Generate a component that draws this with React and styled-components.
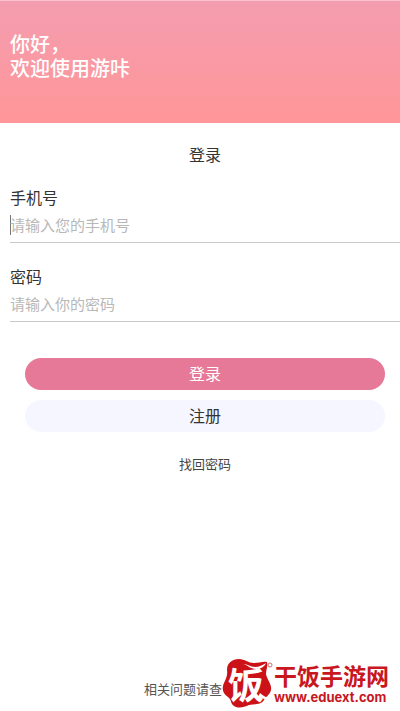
import React from "react"
import styled, { createGlobalStyle } from "styled-components"

const GlobalStyle = createGlobalStyle`
  * {
    box-sizing: border-box;
  }
  body {
    margin: 0;
    background-color: white;
    color: #333333;
    font-family: "Noto Sans CJK SC", sans-serif;
  }
  button,
  input {
    font-family: inherit;
  }
`

const Page = styled.div`
  display: flex;
  flex-direction: column;
  min-height: 100vh;
`
const Header = styled.header`
  padding: 31px 10px 43px;
  background: linear-gradient(#f49db0, #ff9698);
  border-top: 1px solid #f9c3cd;
`
const Greeting = styled.h1`
  margin: 0;
  color: white;
  font-size: 20px;
  font-weight: 500;
  line-height: 24px;
`
const Form = styled.form`
  display: flex;
  flex-direction: column;
`
const Title = styled.h2`
  margin: 19px 0 19px 10px;
  text-align: center;
  font-size: 16px;
  font-weight: 400;
  line-height: 24px;
`
const Field = styled.div`
  display: flex;
  flex-direction: column;
  margin: 0 0 21px 10px;
`
const Label = styled.label`
  font-size: 16px;
  font-weight: 400;
  line-height: 24px;
`
const InputRow = styled.div`
  display: flex;
  align-items: center;
  height: 34px;
  padding-bottom: 2px;
  border-bottom: 1px solid #c8c8c8;
`
const Caret = styled.span`
  width: 1px;
  height: 20px;
  margin-right: -1px;
  background-color: #777777;
`
const Input = styled.input`
  flex: 1;
  min-width: 0;
  padding: 0;
  border: none;
  outline: none;
  background: transparent;
  font-size: 15px;
  line-height: 24px;
  &::placeholder {
    color: #b8b8b8;
    opacity: 1;
  }
`
const Actions = styled.div`
  display: flex;
  flex-direction: column;
  gap: 10px;
  padding: 15px 15px 0 25px;
`
const Button = styled.button`
  height: 32px;
  padding: 0 0 2px;
  border: none;
  border-radius: 16px;
  background-color: ${props => (props.$primary ? "#e67998" : "#f5f6ff")};
  color: ${props => (props.$primary ? "white" : "#333333")};
  font-size: 16px;
  line-height: 24px;
  cursor: pointer;
`
const Recover = styled.a`
  align-self: center;
  margin: 22px 0 0 10px;
  color: #444444;
  font-size: 13px;
  line-height: 20px;
  text-decoration: none;
`
const Footer = styled.footer`
  display: flex;
  align-items: flex-end;
  margin-top: auto;
  padding-left: 36%;
`
const Help = styled.p`
  margin: 0;
  padding-bottom: 12px;
  color: #555555;
  font-size: 13px;
  line-height: 20px;
  white-space: nowrap;
`
const Brand = styled.a`
  display: flex;
  align-items: flex-start;
  color: #c8171e;
  text-decoration: none;
  white-space: nowrap;
`
const Mark = styled.svg`
  flex: none;
  width: 52px;
  height: 54px;
  overflow: visible;
`
const BrandText = styled.span`
  display: flex;
  flex-direction: column;
  padding-top: 4px;
`
const BrandName = styled.strong`
  font-size: 23px;
  font-weight: 700;
  line-height: 28px;
`
const BrandUrl = styled.span`
  font-family: Inter, sans-serif;
  font-size: 13px;
  font-weight: 700;
  line-height: 16px;
`

const Logo = () => (
  <Mark viewBox="0 0 52 54">
    <path
      d="M5 13C5 6 10 2 17 2C23 2 26 6 32 6C37 6 41 4 45 5C46 9 44 13 44 17C45 23 50 27 49 33C48 38 44 39 42 43C39 48 33 47 27 48C22 50 17 52 12 49C8 46 10 43 6 40C2 37 0 34 1 29C2 24 6 21 5 13Z"
      fill="#cc1219"
    />
    <path
      d="M21 7C26 7 28 10 33 10C37 10 41 8 44 6C43 9 39 12 34 12C28 12 26 8 21 7Z"
      fill="white"
    />
    <text
      x="24"
      y="42"
      textAnchor="middle"
      fill="white"
      fontSize="36"
      fontWeight="700"
    >
      饭
    </text>
    <path d="M38 36C41 39 45 41 50 42C46 43 41 42 36 40Z" fill="white" />
    <circle cx="48" cy="8" r="2" fill="none" stroke="#d8676b" strokeWidth="1" />
  </Mark>
)

const App = () => (
  <Page>
    <GlobalStyle />
    <Header>
      <Greeting>
        你好，
        <br />
        欢迎使用游咔
      </Greeting>
    </Header>
    <Form onSubmit={event => event.preventDefault()}>
      <Title>登录</Title>
      <Field>
        <Label htmlFor="phone">手机号</Label>
        <InputRow>
          <Caret />
          <Input id="phone" type="tel" placeholder="请输入您的手机号" />
        </InputRow>
      </Field>
      <Field>
        <Label htmlFor="password">密码</Label>
        <InputRow>
          <Input id="password" type="password" placeholder="请输入你的密码" />
        </InputRow>
      </Field>
      <Actions>
        <Button type="submit" $primary>
          登录
        </Button>
        <Button type="button">注册</Button>
      </Actions>
      <Recover href="#recover">找回密码</Recover>
    </Form>
    <Footer>
      <Help>相关问题请查</Help>
      <Brand href="#home">
        <Logo />
        <BrandText>
          <BrandName>干饭手游网</BrandName>
          <BrandUrl>www.eduext.com</BrandUrl>
        </BrandText>
      </Brand>
    </Footer>
  </Page>
)

export default App
